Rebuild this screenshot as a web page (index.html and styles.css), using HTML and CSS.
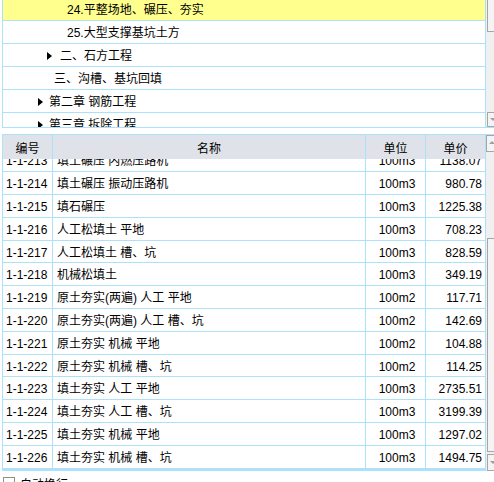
FILE: index.html
```html
<!DOCTYPE html>
<html>
<head>
<meta charset="utf-8">
<link rel="stylesheet" href="styles.css">
</head>
<body>
<div class="tree">
  <div class="tree-list">
    <div class="node sel ind-a">24.平整场地、碾压、夯实</div>
    <div class="node ind-a">25.大型支撑基坑土方</div>
    <div class="node ind-b"><span class="tri"></span><span class="lbl lbl-b">二、石方工程</span></div>
    <div class="node ind-c">三、沟槽、基坑回填</div>
    <div class="node ind-d"><span class="tri"></span><span class="lbl lbl-d">第二章 钢筋工程</span></div>
    <div class="node ind-d"><span class="tri"></span><span class="lbl lbl-d">第三章 拆除工程</span></div>
  </div>
  <div class="vscroll">
    <div class="sb-thumb thumb-top"></div>
    <div class="sb-track"></div>
    <div class="sb-btn btn-down"><span class="arr-down"></span></div>
  </div>
</div>

<div class="table">
  <div class="grid">
    <div class="thead">
      <div class="th">编号</div>
      <div class="th">名称</div>
      <div class="th">单位</div>
      <div class="th">单价</div>
    </div>
    <div class="tbody">
      <div class="rows">
        <div class="tr"><div class="td code">1-1-213</div><div class="td name">填土碾压 内燃压路机</div><div class="td unit">100m3</div><div class="td price">1138.07</div></div>
        <div class="tr"><div class="td code">1-1-214</div><div class="td name">填土碾压 振动压路机</div><div class="td unit">100m3</div><div class="td price">980.78</div></div>
        <div class="tr"><div class="td code">1-1-215</div><div class="td name">填石碾压</div><div class="td unit">100m3</div><div class="td price">1225.38</div></div>
        <div class="tr"><div class="td code">1-1-216</div><div class="td name">人工松填土 平地</div><div class="td unit">100m3</div><div class="td price">708.23</div></div>
        <div class="tr"><div class="td code">1-1-217</div><div class="td name">人工松填土 槽、坑</div><div class="td unit">100m3</div><div class="td price">828.59</div></div>
        <div class="tr"><div class="td code">1-1-218</div><div class="td name">机械松填土</div><div class="td unit">100m3</div><div class="td price">349.19</div></div>
        <div class="tr"><div class="td code">1-1-219</div><div class="td name">原土夯实(两遍) 人工 平地</div><div class="td unit">100m2</div><div class="td price">117.71</div></div>
        <div class="tr"><div class="td code">1-1-220</div><div class="td name">原土夯实(两遍) 人工 槽、坑</div><div class="td unit">100m2</div><div class="td price">142.69</div></div>
        <div class="tr"><div class="td code">1-1-221</div><div class="td name">原土夯实 机械 平地</div><div class="td unit">100m2</div><div class="td price">104.88</div></div>
        <div class="tr"><div class="td code">1-1-222</div><div class="td name">原土夯实 机械 槽、坑</div><div class="td unit">100m2</div><div class="td price">114.25</div></div>
        <div class="tr"><div class="td code">1-1-223</div><div class="td name">填土夯实 人工 平地</div><div class="td unit">100m3</div><div class="td price">2735.51</div></div>
        <div class="tr"><div class="td code">1-1-224</div><div class="td name">填土夯实 人工 槽、坑</div><div class="td unit">100m3</div><div class="td price">3199.39</div></div>
        <div class="tr"><div class="td code">1-1-225</div><div class="td name">填土夯实 机械 平地</div><div class="td unit">100m3</div><div class="td price">1297.02</div></div>
        <div class="tr"><div class="td code">1-1-226</div><div class="td name">填土夯实 机械 槽、坑</div><div class="td unit">100m3</div><div class="td price">1494.75</div></div>
      </div>
    </div>
  </div>
  <div class="vscroll">
    <div class="sb-btn btn-up"><span class="arr-up"></span></div>
    <div class="sb-track"></div>
    <div class="sb-thumb thumb-table"></div>
    <div class="sb-btn btn-down"><span class="arr-down"></span></div>
  </div>
</div>

<div class="wrap-opt">
  <span class="chk"></span>
  <span class="opt-lbl">自动换行</span>
</div>
</body>
</html>
```

FILE: styles.css
```css
html, body {
  margin: 0;
  padding: 0;
  overflow: hidden;
  background: #ffffff;
}

body {
  font-family: "Liberation Sans", "Noto Sans CJK SC", sans-serif;
  font-size: 12px;
  color: #000;
  width: 520px;
}

/* ---------- tree panel ---------- */
.tree {
  display: flex;
  margin-left: 2px;
  width: 501px;
  height: 128px;
  box-sizing: border-box;
  border-left: 1px solid #ade0fa;
  border-bottom: 1px solid #ade0fa;
}

.tree-list {
  width: 483px;
  flex: none;
  box-sizing: border-box;
  border-right: 1px solid #ade0fa;
  overflow: hidden;
}

.node {
  display: flex;
  align-items: center;
  height: 23px;
  box-sizing: border-box;
  border-bottom: 1px solid #ade0fa;
  padding-top: 3px;
  line-height: 19px;
  white-space: nowrap;
}

.node:first-child {
  margin-top: -2px;
}

.node.sel {
  background: #ffff8e;
}

.ind-a { padding-left: 64px; }
.ind-b { padding-left: 44px; }
.ind-c { padding-left: 51px; }
.ind-d { padding-left: 35px; }

.tri {
  width: 0;
  height: 0;
  border-style: solid;
  border-width: 4px 0 4px 5px;
  border-color: transparent transparent transparent #000;
  margin-top: -1px;
}

.lbl-b { margin-left: 8px; }
.lbl-d { margin-left: 6px; }

/* ---------- scrollbars ---------- */
.vscroll {
  width: 17px;
  flex: none;
  display: flex;
  flex-direction: column;
  background: #f0f0f0;
}

.sb-track {
  flex: 1;
}

.sb-thumb {
  margin-left: 1px;
  box-sizing: border-box;
  border: 1px solid #a6a6a6;
  background: #f4f4f4;
}

.thumb-top {
  height: 32px;
  border-top: none;
}

.thumb-table {
  height: 214px;
}

.sb-btn {
  box-sizing: border-box;
  border: 1px solid #a6a6a6;
  background: #f4f4f4;
  display: flex;
  padding-left: 2px;
}

.tree .btn-down {
  height: 15px;
  margin-left: 1px;
  align-items: center;
}

.table .btn-up {
  height: 17px;
  padding-top: 5px;
}

.table .btn-down {
  height: 17px;
  margin-left: 1px;
  margin-top: 2px;
  align-items: center;
}

.arr-up {
  width: 0;
  height: 0;
  border-style: solid;
  border-width: 0 3px 3px 3px;
  border-color: transparent transparent #a0a0a0 transparent;
}

.arr-down {
  width: 0;
  height: 0;
  border-style: solid;
  border-width: 3px 3px 0 3px;
  border-color: #a0a0a0 transparent transparent transparent;
}

/* ---------- table ---------- */
.table {
  display: flex;
  margin-top: 6px;
  margin-left: 2px;
  width: 501px;
  box-sizing: border-box;
  border-left: 1px solid #ade0fa;
  border-top: 1px solid #ade0fa;
}

.grid {
  width: 483px;
  flex: none;
}

.thead,
.tr {
  display: grid;
  grid-template-columns: 50px 313px 60px 60px;
}

.thead {
  height: 24px;
  background: #dfe2e8;
}

.th {
  box-sizing: border-box;
  border-right: 1px solid #ade0fa;
  text-align: center;
  padding-top: 5px;
  line-height: 18px;
}

.tbody {
  height: 310px;
  overflow: hidden;
  border-bottom: 2px solid #ade0fa;
}

.rows {
  margin-top: -9.6px;
}

.tr {
  height: 22.8px;
  box-sizing: border-box;
  border-bottom: 1px solid #ade0fa;
}

.td {
  box-sizing: border-box;
  border-right: 1px solid #ade0fa;
  padding-top: 3px;
  line-height: 19px;
  white-space: nowrap;
  overflow: hidden;
}

.code { padding-left: 3px; }
.name { padding-left: 4px; }
.unit { text-align: center; padding-left: 3px; }
.price { text-align: right; padding-right: 3px; }

/* ---------- bottom option ---------- */
.wrap-opt {
  display: flex;
  align-items: flex-start;
  margin-top: 6px;
  margin-left: 3px;
}

.chk {
  width: 12px;
  height: 12px;
  box-sizing: border-box;
  border: 1px solid #8f8f8f;
  background: #fff;
  flex: none;
}

.opt-lbl {
  margin-left: 5px;
  margin-top: 0;
  line-height: 16px;
}
```
